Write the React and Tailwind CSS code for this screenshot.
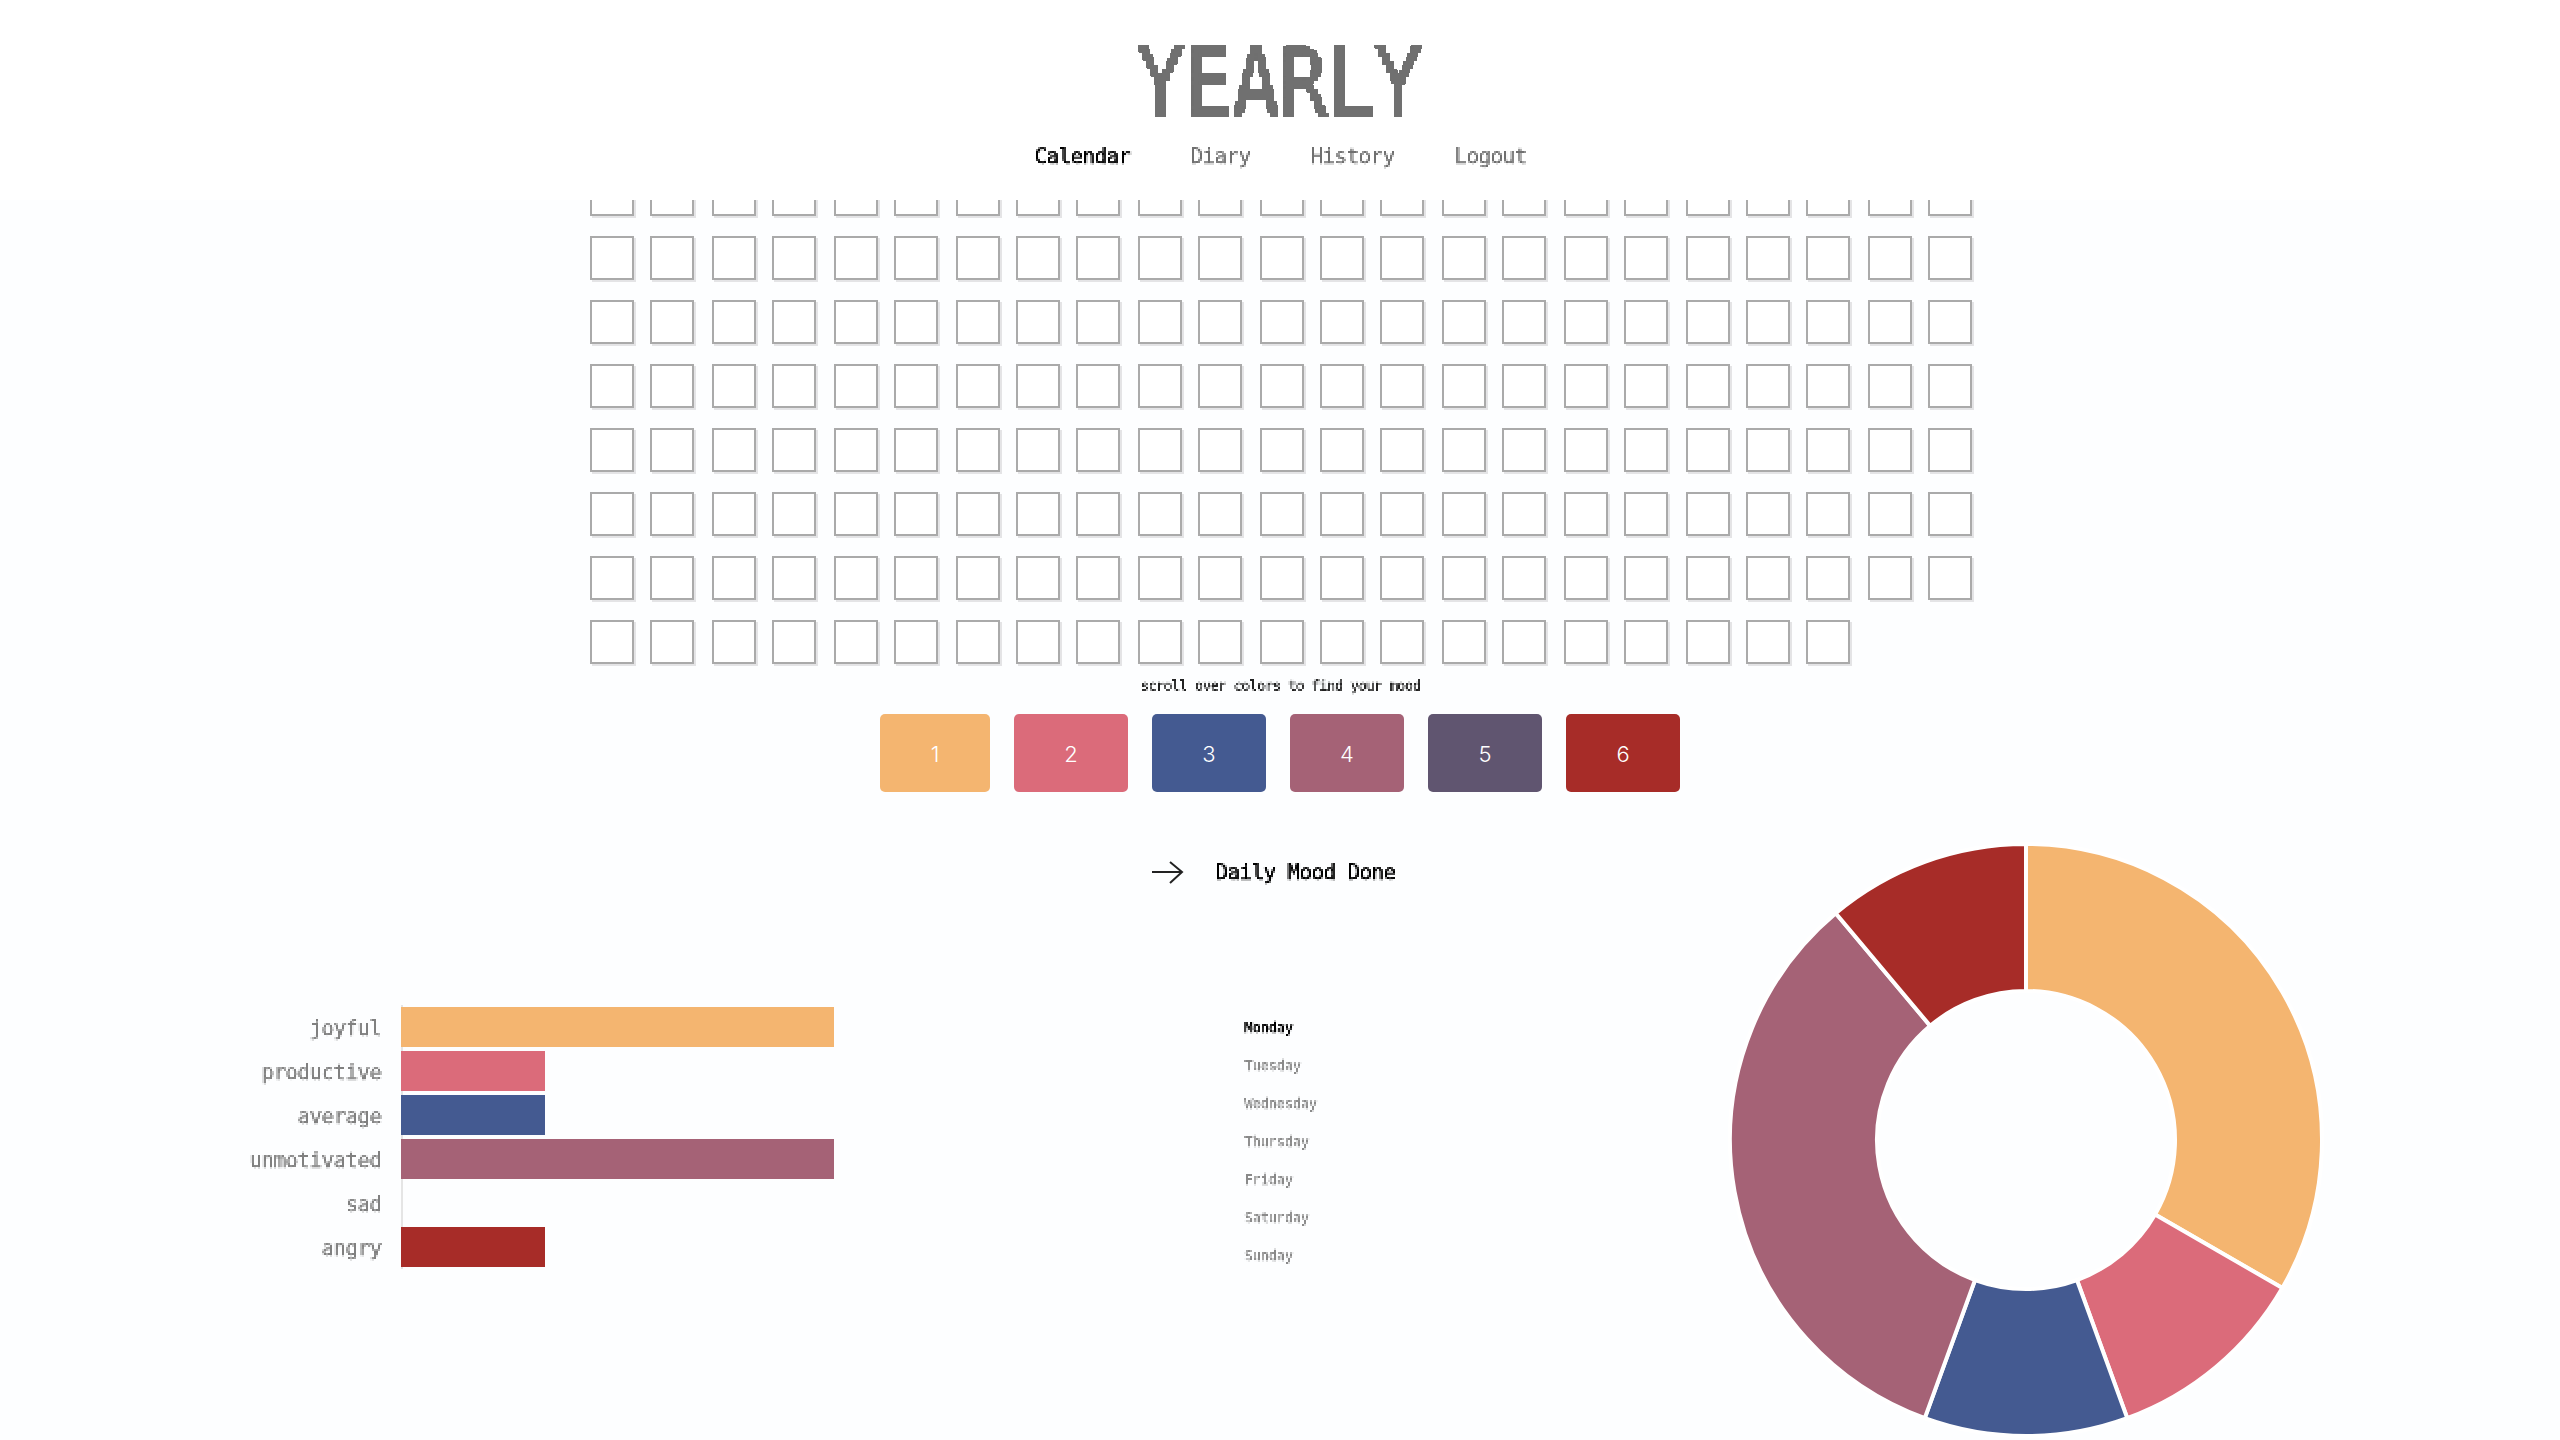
import React from 'react';

const moods = [
    { name: 'joyful', value: 3, color: '#f4b570' },
    { name: 'productive', value: 1, color: '#db6b7a' },
    { name: 'average', value: 1, color: '#445a91' },
    { name: 'unmotivated', value: 3, color: '#a56276' },
    { name: 'sad', value: 0, color: '#605570' },
    { name: 'angry', value: 1, color: '#a72c28' },
];

const days = ['Monday', 'Tuesday', 'Wednesday', 'Thursday', 'Friday', 'Saturday', 'Sunday'];
const links = ['Calendar', 'Diary', 'History', 'Logout'];
const cells = Array.from({ length: 182 });

const point = (radius, angle) => {
    const rad = (angle * Math.PI) / 180;
    return `${298 + radius * Math.sin(rad)} ${298 - radius * Math.cos(rad)}`;
};

const slicePath = (from, to) =>
    `M${point(296, from)} A296 296 0 ${to - from > 180 ? 1 : 0} 1 ${point(296, to)} L${point(149, to)} A149 149 0 ${to - from > 180 ? 1 : 0} 0 ${point(149, from)} Z`;

const Donut = () => {
    const total = moods.reduce((sum, m) => sum + m.value, 0);
    let angle = 0;
    return (
        <svg width="596" height="596" viewBox="0 0 596 596" className="-mt-[2px] -ml-[2px] shrink-0">
            {moods.filter((m) => m.value > 0).map((m) => {
                const from = angle;
                angle += (m.value / total) * 360;
                return <path key={m.name} d={slicePath(from, angle)} fill={m.color} stroke="#ffffff" strokeWidth="4" />;
            })}
        </svg>
    );
};

const App = () => {
    return (
        <div className="h-screen overflow-hidden bg-[#fdfeff] font-['DejaVu_Sans_Mono',monospace]">
            <svg width="0" height="0" className="absolute">
                {/* the text in the picture is blocky, these two filters give it that look */}
                <filter id="px2" x="0" y="0" width="100%" height="100%" colorInterpolationFilters="sRGB">
                    <feFlood x="0" y="0" width="1" height="1" />
                    <feComposite width="2" height="2" />
                    <feTile result="grid" />
                    <feComposite in="SourceGraphic" in2="grid" operator="in" result="dots" />
                    <feOffset in="dots" dx="1" dy="0" result="a" />
                    <feOffset in="dots" dx="0" dy="1" result="b" />
                    <feOffset in="dots" dx="1" dy="1" result="c" />
                    <feMerge>
                        <feMergeNode in="dots" />
                        <feMergeNode in="a" />
                        <feMergeNode in="b" />
                        <feMergeNode in="c" />
                    </feMerge>
                    <feGaussianBlur stdDeviation="0.35" />
                </filter>
                <filter id="px4" x="0" y="0" width="100%" height="100%" colorInterpolationFilters="sRGB">
                    <feFlood x="1" y="1" width="2" height="2" />
                    <feComposite width="4" height="4" />
                    <feTile result="grid" />
                    <feComposite in="SourceGraphic" in2="grid" operator="in" />
                    <feMorphology operator="dilate" radius="1" />
                    <feComponentTransfer>
                        <feFuncA type="discrete" tableValues="0 1 1" />
                    </feComponentTransfer>
                </filter>
            </svg>

            {/* Header */}
            <header className="h-[200px] bg-white flex flex-col items-center pt-[37px]">
                <div className="[filter:url(#px4)]">
                    <h1 className="scale-x-[0.84] text-[94px] leading-[94px] font-normal text-[#707070] [-webkit-text-stroke:1.5px_#707070]">YEARLY</h1>
                </div>
                <nav className="flex gap-[60px] mt-[10px] text-[21px] tracking-[-0.64px] leading-[30px] [filter:url(#px2)]">
                    {links.map((link, i) => (
                        <a key={link} className={i === 0 ? 'text-black [-webkit-text-stroke:0.6px_#000000]' : 'text-[#707070] [-webkit-text-stroke:0.3px_#707070]'}>{link}</a>
                    ))}
                </nav>
            </header>

            {/* Calendar */}
            <div className="h-[468px] overflow-hidden flex justify-center pl-[18px]">
                <div className="-mt-[28px] grid grid-cols-[60px_62px_60px_62px_60px_62px_60px_60px_62px_60px_62px_60px_60px_62px_60px_62px_60px_62px_60px_60px_62px_60px_60px] gap-y-[20px] content-start">
                    {cells.map((_, i) => (
                        <div key={i} className="w-[44px] h-[44px] bg-white border-2 border-[#aaaaaa] shadow-[2px_2px_0_#e4e4e6]" />
                    ))}
                </div>
            </div>

            <p className="mt-[7px] text-center text-[14px] tracking-[-0.65px] leading-[20px] text-[#222222] [-webkit-text-stroke:0.3px_#222222] [filter:url(#px2)]">scroll over colors to find your mood</p>

            <div className="mt-[19px] flex justify-center gap-[24px]">
                {moods.map((m, i) => (
                    <button
                        key={m.name}
                        className={`h-[78px] pt-[2px] rounded-[5px] font-['Inter',sans-serif] font-light text-[22px] text-white ${i === 0 ? 'w-[110px]' : 'w-[114px]'}`}
                        style={{ backgroundColor: m.color }}
                    >
                        {i + 1}
                    </button>
                ))}
            </div>

            {/* Charts */}
            <div className="mt-[52px] flex">
                <div className="ml-[240px] w-[594px] pt-[161px] flex items-start">
                    <div className="w-[141px] py-[2px] flex flex-col gap-[4px] text-[21px] tracking-[-0.64px] text-[#808080] [-webkit-text-stroke:0.3px_#808080] [filter:url(#px2)]">
                        {moods.map((m) => (
                            <div key={m.name} className="h-[40px] pt-[4px] flex items-center justify-end">{m.name}</div>
                        ))}
                    </div>
                    <div className="ml-[20px] flex-1 py-[2px] flex flex-col gap-[4px] border-l-2 border-[#e5e5e5]">
                        {moods.map((m) => (
                            <div
                                key={m.name}
                                className="h-[40px] -ml-[2px]"
                                style={{ width: (m.value / 3) * 433, backgroundColor: m.color }}
                            />
                        ))}
                    </div>
                </div>

                <div className="ml-[318px] w-[578px]">
                    <div className="h-[56px] flex items-center gap-[31px] text-[21px] tracking-[-0.64px] text-black">
                        <svg width="32" height="24" viewBox="0 0 32 24" fill="none" stroke="#222222" strokeWidth="2">
                            <path d="M0 12H30M18 2L30 12L18 23" />
                        </svg>
                        <span className="pt-[2px] [-webkit-text-stroke:0.6px_#000000] [filter:url(#px2)]">Daily Mood Done</span>
                    </div>
                    <ul className="mt-[108px] ml-[92px] text-[14px] tracking-[-0.4px] leading-[38px] text-[#8a8a8a] [-webkit-text-stroke:0.3px_#8a8a8a] [filter:url(#px2)]">
                        {days.map((day, i) => (
                            <li key={day} className={i === 0 ? 'text-black [-webkit-text-stroke:0.6px_#000000]' : ''}>{day}</li>
                        ))}
                    </ul>
                </div>

                <Donut />
            </div>
        </div>
    );
};

export default App;
